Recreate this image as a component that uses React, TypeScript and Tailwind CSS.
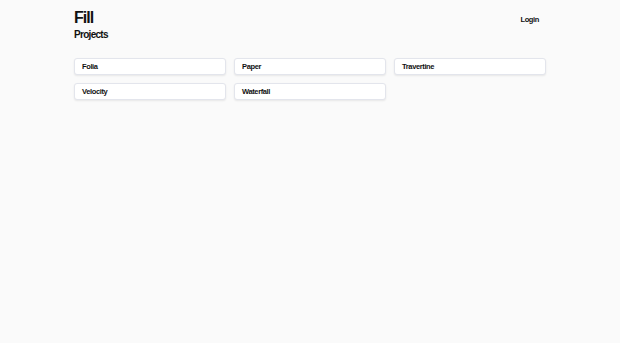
import React from "react";

const projects = ["Folia", "Paper", "Travertine", "Velocity", "Waterfall"];

const App: React.FC = () => {
  return (
    <div
      className="min-h-screen w-full bg-[#fafafa] text-[#111111]"
      style={{ fontFamily: '"Liberation Sans", Arial, sans-serif' }}
    >
      <div className="mx-auto w-[472px] pt-[8px]">
        {/* Header */}
        <div className="flex items-start justify-between">
          <div>
            <h1 className="text-[16px] leading-[19px] font-bold tracking-[-0.06em]">Fill</h1>
            <h2 className="mt-[2px] text-[10px] leading-[12px] font-bold tracking-[-0.07em]">
              Projects
            </h2>
          </div>
          <button className="mt-[7px] mr-[7px] text-[7.5px] leading-[10px] font-bold tracking-[-0.05em]">
            Login
          </button>
        </div>

        {/* Project grid */}
        <div className="mt-[17px] grid grid-cols-3 gap-[8px]">
          {projects.map((name) => (
            <div
              key={name}
              className="flex h-[17px] items-center rounded-[3px] border border-[#e3e5ec] bg-white px-[7px] text-[7.5px] font-bold tracking-[-0.05em] shadow-[0_1px_2px_rgba(0,0,0,0.08)]"
            >
              {name}
            </div>
          ))}
        </div>
      </div>
    </div>
  );
};

export default App;
